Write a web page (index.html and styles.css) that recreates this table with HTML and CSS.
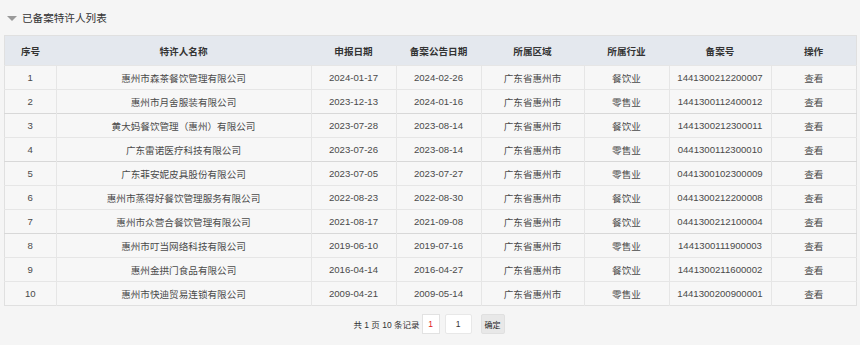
FILE: index.html
```html
<!DOCTYPE html>
<html lang="zh-CN">

<head>
    <meta charset="UTF-8">
    <title>已备案特许人列表</title>
    <link rel="stylesheet" href="styles.css">
</head>

<body>

    <div class="title">
        <span class="arrow"></span>
        <span>已备案特许人列表</span>
    </div>

    <table class="list">
        <thead>
            <tr>
                <th class="c-no">序号</th>
                <th class="c-name">特许人名称</th>
                <th class="c-date">申报日期</th>
                <th class="c-date">备案公告日期</th>
                <th class="c-area">所属区域</th>
                <th class="c-trade">所属行业</th>
                <th class="c-code">备案号</th>
                <th class="c-op">操作</th>
            </tr>
        </thead>
        <tbody>
            <tr><td>1</td><td>惠州市森茶餐饮管理有限公司</td><td>2024-01-17</td><td>2024-02-26</td><td>广东省惠州市</td><td>餐饮业</td><td>1441300212200007</td><td>查看</td></tr>
            <tr><td>2</td><td>惠州市月舍服装有限公司</td><td>2023-12-13</td><td>2024-01-16</td><td>广东省惠州市</td><td>零售业</td><td>1441300112400012</td><td>查看</td></tr>
            <tr><td>3</td><td>黄大妈餐饮管理（惠州）有限公司</td><td>2023-07-28</td><td>2023-08-14</td><td>广东省惠州市</td><td>餐饮业</td><td>1441300212300011</td><td>查看</td></tr>
            <tr><td>4</td><td>广东雷诺医疗科技有限公司</td><td>2023-07-26</td><td>2023-08-14</td><td>广东省惠州市</td><td>零售业</td><td>0441300112300010</td><td>查看</td></tr>
            <tr><td>5</td><td>广东菲安妮皮具股份有限公司</td><td>2023-07-05</td><td>2023-07-27</td><td>广东省惠州市</td><td>零售业</td><td>0441300102300009</td><td>查看</td></tr>
            <tr><td>6</td><td>惠州市蒸得好餐饮管理服务有限公司</td><td>2022-08-23</td><td>2022-08-30</td><td>广东省惠州市</td><td>餐饮业</td><td>0441300212200008</td><td>查看</td></tr>
            <tr><td>7</td><td>惠州市众营合餐饮管理有限公司</td><td>2021-08-17</td><td>2021-09-08</td><td>广东省惠州市</td><td>餐饮业</td><td>0441300212100004</td><td>查看</td></tr>
            <tr><td>8</td><td>惠州市叮当网络科技有限公司</td><td>2019-06-10</td><td>2019-07-16</td><td>广东省惠州市</td><td>零售业</td><td>1441300111900003</td><td>查看</td></tr>
            <tr><td>9</td><td>惠州金拱门食品有限公司</td><td>2016-04-14</td><td>2016-04-27</td><td>广东省惠州市</td><td>餐饮业</td><td>1441300211600002</td><td>查看</td></tr>
            <tr><td>10</td><td>惠州市快迪贸易连锁有限公司</td><td>2009-04-21</td><td>2009-05-14</td><td>广东省惠州市</td><td>零售业</td><td>1441300200900001</td><td>查看</td></tr>
        </tbody>
    </table>

    <!-- 分页 -->
    <div class="pager">
        <span class="pager-info">共 1 页 10 条记录</span>
        <span class="page-num">1</span>
        <input class="page-input" type="text" value="1">
        <button class="page-go">确定</button>
    </div>

</body>

</html>
```

FILE: styles.css
```css
body {
    margin: 0;
    background-color: #f5f5f5;
    font-family: "Liberation Sans", "Noto Sans CJK SC", sans-serif;
    color: #4a4a4a;
}

.title {
    display: flex;
    align-items: center;
    height: 35px;
    padding-left: 7px;
    font-size: 10.6px;
    color: #333;
}

.arrow {
    width: 0;
    height: 0;
    border-left: 5px solid transparent;
    border-right: 5px solid transparent;
    border-top: 5px solid #999;
    margin-right: 5px;
    margin-top: 1px;
}

.list {
    margin-left: 4px;
    width: 851px;
    border-collapse: collapse;
    table-layout: fixed;
    font-size: 9.6px;
    background-color: #f7f7f7;
    border: 1px solid #e0e0e0;
}

.list th {
    height: 29px;
    padding: 0;
    background-color: #e4e8ee;
    color: #333;
    font-weight: bold;
    text-align: center;
}

.list td {
    height: 23px;
    padding: 0;
    text-align: center;
    border-top: 1px solid #e6e6e6;
    border-left: 1px solid #e6e6e6;
    white-space: nowrap;
}

.list td:first-child {
    border-left: none;
}

.list tr:nth-child(3) td,
.list tr:nth-child(5) td,
.list tr:nth-child(8) td {
    border-top-color: #d8d8d8;
}

.c-no { width: 51px; }
.c-name { width: 255px; }
.c-date { width: 85px; }
.c-area { width: 103px; }
.c-trade { width: 85px; }
.c-code { width: 102px; }
.c-op { width: 85px; }

.pager {
    display: flex;
    justify-content: center;
    align-items: center;
    gap: 5px;
    margin-top: 8px;
    padding-right: 2px;
    font-size: 8.5px;
    color: #333;
}

.pager-info {
    margin-right: -3px;
}

.page-num {
    width: 18px;
    height: 20px;
    box-sizing: border-box;
    border: 1px solid #e2e2e2;
    background-color: #fff;
    color: #e02020;
    display: flex;
    align-items: center;
    justify-content: center;
}

.page-input {
    width: 27px;
    height: 20px;
    box-sizing: border-box;
    border: 1px solid #e8e8e8;
    border-radius: 2px;
    background-color: #fff;
    text-align: center;
    font-size: 8.5px;
    font-family: inherit;
    color: #333;
    padding: 0;
    margin-right: 4px;
}

.page-go {
    width: 24px;
    height: 20px;
    padding: 0;
    border: 1px solid #e0e0e0;
    border-radius: 2px;
    background-color: #e8e8e8;
    font-size: 8px;
    font-family: inherit;
    color: #222;
}
```
